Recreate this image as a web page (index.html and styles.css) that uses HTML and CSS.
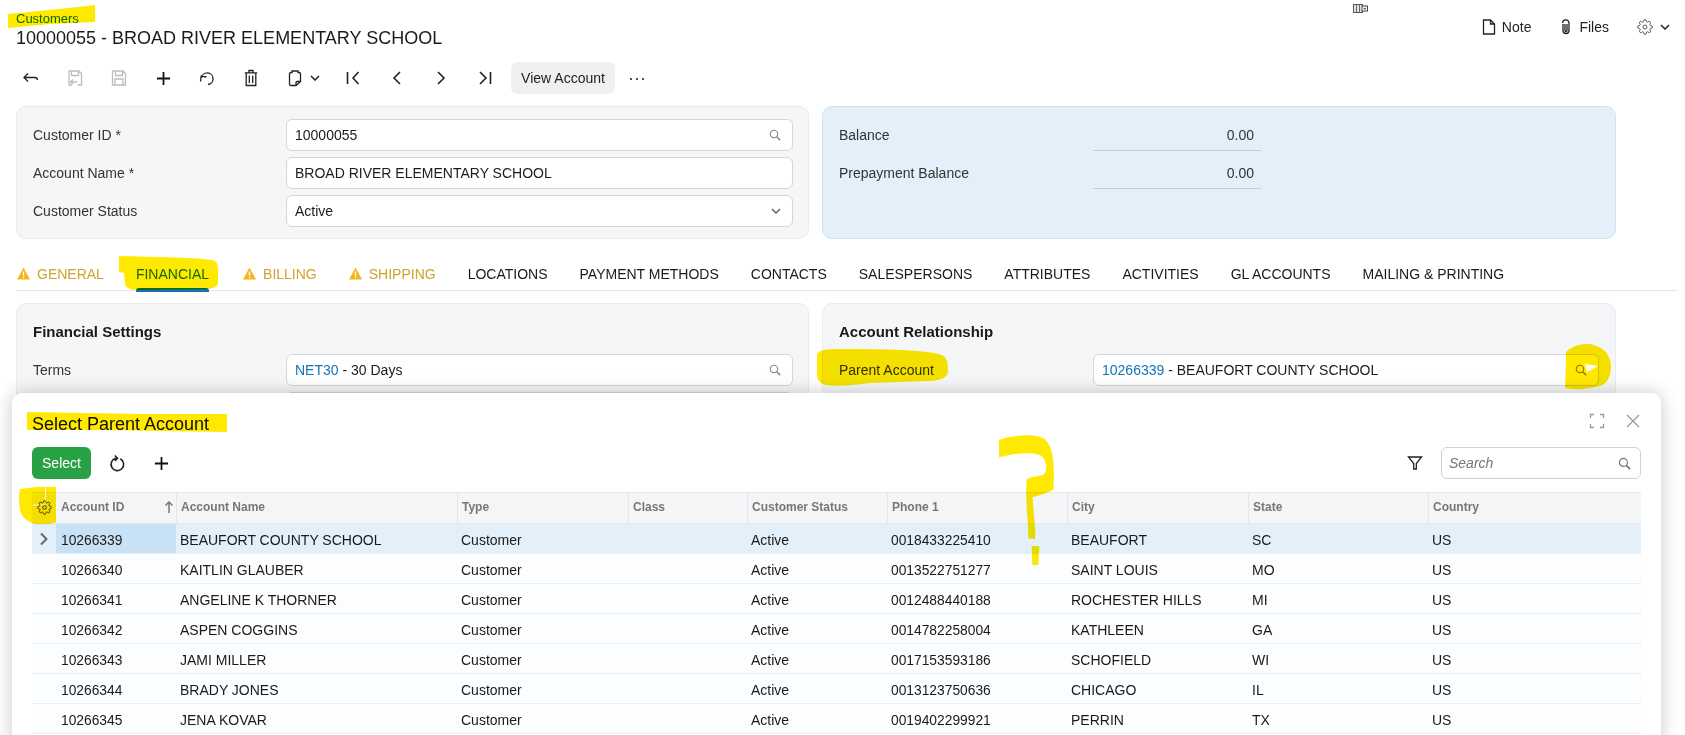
FILE: index.html
```html
<!DOCTYPE html>
<html lang="en">
<head>
<meta charset="utf-8">
<title>Customers</title>
<link rel="stylesheet" href="styles.css">
</head>
<body>
<svg class="defs" width="0" height="0" aria-hidden="true">
  <symbol id="i-search" viewBox="0 0 14 14"><circle cx="5.8" cy="5.8" r="4.3"/><path d="M9 9l4 4" stroke-width="1.8"/></symbol>
  <symbol id="i-chev" viewBox="0 0 10 6"><path d="M1 1l4 4 4-4"/></symbol>
  <symbol id="i-gear" viewBox="0 0 24 24"><path d="M12 15a3 3 0 1 0 0-6 3 3 0 0 0 0 6z"/><path d="M19.4 15a1.65 1.65 0 0 0 .33 1.82l.06.06a2 2 0 0 1 0 2.83 2 2 0 0 1-2.83 0l-.06-.06a1.65 1.65 0 0 0-1.82-.33 1.65 1.65 0 0 0-1 1.51V21a2 2 0 0 1-2 2 2 2 0 0 1-2-2v-.09A1.65 1.65 0 0 0 9 19.4a1.65 1.65 0 0 0-1.82.33l-.06.06a2 2 0 0 1-2.83 0 2 2 0 0 1 0-2.83l.06-.06a1.65 1.65 0 0 0 .33-1.82 1.65 1.65 0 0 0-1.51-1H3a2 2 0 0 1-2-2 2 2 0 0 1 2-2h.09A1.65 1.65 0 0 0 4.6 9a1.65 1.65 0 0 0-.33-1.82l-.06-.06a2 2 0 0 1 0-2.83 2 2 0 0 1 2.83 0l.06.06a1.65 1.65 0 0 0 1.82.33H9a1.65 1.65 0 0 0 1-1.51V3a2 2 0 0 1 2-2 2 2 0 0 1 2 2v.09a1.65 1.65 0 0 0 1 1.51 1.65 1.65 0 0 0 1.82-.33l.06-.06a2 2 0 0 1 2.83 0 2 2 0 0 1 0 2.83l-.06.06a1.65 1.65 0 0 0-.33 1.82V9a1.65 1.65 0 0 0 1.51 1H21a2 2 0 0 1 2 2 2 2 0 0 1-2 2h-.09a1.65 1.65 0 0 0-1.51 1z"/></symbol>
  <symbol id="i-warn" viewBox="0 0 13 13"><path d="M6.5 0.5L13 12.5H0z" fill="#f5b71e" stroke="none"/><path d="M6.5 4.5v4.2M6.5 9.8v1.2" stroke="#fff" stroke-width="1.3"/></symbol>
  <symbol id="i-plus" viewBox="0 0 16 16"><path d="M8 1v14M1 8h14"/></symbol>
</svg>

<div class="page">
  <header class="head">
    <svg class="tinyicon" viewBox="0 0 15 9"><rect x="0.5" y="0.5" width="9" height="8" fill="#e4e4e6" stroke="#555"/><path d="M3.5 1v7M6.5 1v7" stroke="#666"/><rect x="9" y="2" width="5.5" height="5" fill="#fff" stroke="#444"/><rect x="10.8" y="3.8" width="2" height="1.6" fill="#444"/></svg>
    <div class="head-left">
      <a class="crumb">Customers</a>
      <h1 class="title">10000055 - BROAD RIVER ELEMENTARY SCHOOL</h1>
    </div>
    <div class="head-right">
      <span class="ha"><svg class="ic ic-16" viewBox="0 0 16 16"><path d="M2.5 1h7l4 4v10h-11zM9.5 1v4h4"/></svg>Note</span>
      <span class="ha"><svg class="ic ic-16" viewBox="0 0 16 16"><path d="M5 5v6.5a3 3 0 0 0 6 0V4a3.200 3.200 0 0 0-6.400 0M7 5v6.500a1 1 0 0 0 2 0V5"/></svg>Files</span>
      <span class="ha ha-gear"><svg class="ic ic-gear"><use href="#i-gear"/></svg><svg class="ic ic-chev"><use href="#i-chev"/></svg></span>
    </div>
  </header>

  <nav class="toolbar">
    <span class="tb"><svg class="ic ic-18" viewBox="0 0 18 18"><path d="M2 8.5h11c1.6 0 2.4 1 2.4 2.6M6 4.5l-4 4 4 4"/></svg></span>
    <span class="tb off"><svg class="ic ic-18" viewBox="0 0 18 18"><path d="M6 16H3V2h10l2.5 2.5V16h-4M5.5 2v4.5h7V2M7 10.5l-2.5 2.5L7 15M4.5 13H11"/></svg></span>
    <span class="tb off"><svg class="ic ic-18" viewBox="0 0 18 18"><path d="M2.5 2h10.500l2.500 2.500V16h-13zM5.500 2v4.500h7V2M5 16v-6h8v6"/></svg></span>
    <span class="tb"><svg class="ic ic-plus"><use href="#i-plus"/></svg></span>
    <span class="tb"><svg class="ic ic-18" viewBox="0 0 18 18"><path d="M3.500 9a5.800 5.800 0 1 1 6.500 6.500M2.500 12.500L3.200 7l5.300 1"/></svg></span>
    <span class="tb"><svg class="ic ic-18" viewBox="0 0 18 18"><path d="M2.800 3.800h12.400M7 3.500V1.500h4v2M4.200 4v12.500h9.600V4M7.300 6.500v7.500M10.700 6.500v7.500"/></svg></span>
    <span class="tb tb-split"><svg class="ic ic-18" viewBox="0 0 18 18"><path d="M5 3.500H6V2H12V3.500H13Q14.500 3.500 14.500 5V12.500L10 16.500H5Q3.500 16.500 3.500 15V5Q3.500 3.500 5 3.500ZM14.500 12.500H11Q10 12.500 10 13.500V16.500"/></svg><svg class="ic ic-chev"><use href="#i-chev"/></svg></span>
    <span class="tb"><svg class="ic ic-18 strong" viewBox="0 0 18 18"><path d="M3.500 3v12M14.500 3L9 9l5.500 6"/></svg></span>
    <span class="tb"><svg class="ic ic-18 strong" viewBox="0 0 18 18"><path d="M12 3L6 9l6 6"/></svg></span>
    <span class="tb"><svg class="ic ic-18 strong" viewBox="0 0 18 18"><path d="M6 3l6 6-6 6"/></svg></span>
    <span class="tb"><svg class="ic ic-18 strong" viewBox="0 0 18 18"><path d="M14.500 3v12M4 3l6 6-6 6"/></svg></span>
    <button class="btn-soft">View Account</button>
    <span class="tb dots">···</span>
  </nav>

  <section class="cards">
    <div class="card">
      <div class="row"><label class="lbl">Customer ID *</label><div class="field">10000055<svg class="ic ic-find"><use href="#i-search"/></svg></div></div>
      <div class="row"><label class="lbl">Account Name *</label><div class="field">BROAD RIVER ELEMENTARY SCHOOL</div></div>
      <div class="row"><label class="lbl">Customer Status</label><div class="field">Active<svg class="ic ic-chev end"><use href="#i-chev"/></svg></div></div>
    </div>
    <div class="card card-blue">
      <div class="row"><label class="lbl">Balance</label><div class="amount">0.00</div></div>
      <div class="row"><label class="lbl">Prepayment Balance</label><div class="amount">0.00</div></div>
    </div>
  </section>

  <nav class="tabs">
    <span class="tab warn"><svg class="warn-ic"><use href="#i-warn"/></svg>GENERAL</span>
    <span class="tab active">FINANCIAL</span>
    <span class="tab warn"><svg class="warn-ic"><use href="#i-warn"/></svg>BILLING</span>
    <span class="tab warn"><svg class="warn-ic"><use href="#i-warn"/></svg>SHIPPING</span>
    <span class="tab">LOCATIONS</span>
    <span class="tab">PAYMENT METHODS</span>
    <span class="tab">CONTACTS</span>
    <span class="tab">SALESPERSONS</span>
    <span class="tab">ATTRIBUTES</span>
    <span class="tab">ACTIVITIES</span>
    <span class="tab">GL ACCOUNTS</span>
    <span class="tab">MAILING &amp; PRINTING</span>
  </nav>

  <section class="cards cards-lower">
    <div class="card">
      <h2 class="card-title">Financial Settings</h2>
      <div class="row"><label class="lbl">Terms</label><div class="field"><a class="link">NET30</a>&nbsp;- 30 Days<svg class="ic ic-find"><use href="#i-search"/></svg></div></div>
      <div class="row"><label class="lbl"></label><div class="field"></div></div>
    </div>
    <div class="card">
      <h2 class="card-title">Account Relationship</h2>
      <div class="row"><label class="lbl">Parent Account</label><div class="field"><a class="link">10266339</a>&nbsp;- BEAUFORT COUNTY SCHOOL<svg class="ic ic-find"><use href="#i-search"/></svg></div></div>
    </div>
  </section>

  <div class="modal">
    <div class="modal-head">
      <h2 class="modal-title">Select Parent Account</h2>
      <div class="modal-ctl">
        <svg class="ic ic-16 pale" viewBox="0 0 16 16"><path d="M1.500 5V1.500H5M11 1.500h3.500V5M14.500 11v3.500H11M5 14.500H1.500V11"/></svg>
        <svg class="ic ic-16 pale" viewBox="0 0 16 16"><path d="M2 2l12 12M14 2L2 14"/></svg>
      </div>
    </div>
    <div class="modal-tools">
      <button class="btn-green">Select</button>
      <span class="tb"><svg class="ic ic-18 strong" viewBox="0 0 18 18"><path d="M8 4.200A6.300 6.300 0 1 0 12.300 4.800M6.800 1.500L9.500 4.200L6.800 6.800"/></svg></span>
      <span class="tb"><svg class="ic ic-plus"><use href="#i-plus"/></svg></span>
      <span class="tb tb-right"><svg class="ic ic-16" viewBox="0 0 16 16"><path d="M1.500 2h13L9.300 8.500V14H6.700V8.500z"/></svg></span>
      <div class="search"><span class="ph">Search</span><svg class="ic ic-find"><use href="#i-search"/></svg></div>
    </div>
    <div class="grid">
      <div class="g-row g-head">
        <div class="gh gh-gear"><svg class="ic ic-gear-sm"><use href="#i-gear"/></svg></div>
        <div class="gh gh-sort">Account ID<svg class="ic sort" viewBox="0 0 10 14"><path d="M5 13V2M1.500 5.500L5 2l3.500 3.500"/></svg></div>
        <div class="gh">Account Name</div>
        <div class="gh">Type</div>
        <div class="gh">Class</div>
        <div class="gh">Customer Status</div>
        <div class="gh">Phone 1</div>
        <div class="gh">City</div>
        <div class="gh">State</div>
        <div class="gh">Country</div>
      </div>
      <div class="g-row g-sel">
        <div class="gc gc-exp"><svg class="ic exp" viewBox="0 0 10 14"><path d="M2 1.500L7.500 7 2 12.500"/></svg></div>
        <div class="gc gc-id gc-cur">10266339</div><div class="gc">BEAUFORT COUNTY SCHOOL</div><div class="gc">Customer</div><div class="gc"></div><div class="gc">Active</div><div class="gc gc-num">0018433225410</div><div class="gc">BEAUFORT</div><div class="gc">SC</div><div class="gc">US</div>
      </div>
      <div class="g-row">
        <div class="gc"></div><div class="gc gc-id">10266340</div><div class="gc">KAITLIN GLAUBER</div><div class="gc">Customer</div><div class="gc"></div><div class="gc">Active</div><div class="gc gc-num">0013522751277</div><div class="gc">SAINT LOUIS</div><div class="gc">MO</div><div class="gc">US</div>
      </div>
      <div class="g-row">
        <div class="gc"></div><div class="gc gc-id">10266341</div><div class="gc">ANGELINE K THORNER</div><div class="gc">Customer</div><div class="gc"></div><div class="gc">Active</div><div class="gc gc-num">0012488440188</div><div class="gc">ROCHESTER HILLS</div><div class="gc">MI</div><div class="gc">US</div>
      </div>
      <div class="g-row">
        <div class="gc"></div><div class="gc gc-id">10266342</div><div class="gc">ASPEN COGGINS</div><div class="gc">Customer</div><div class="gc"></div><div class="gc">Active</div><div class="gc gc-num">0014782258004</div><div class="gc">KATHLEEN</div><div class="gc">GA</div><div class="gc">US</div>
      </div>
      <div class="g-row">
        <div class="gc"></div><div class="gc gc-id">10266343</div><div class="gc">JAMI MILLER</div><div class="gc">Customer</div><div class="gc"></div><div class="gc">Active</div><div class="gc gc-num">0017153593186</div><div class="gc">SCHOFIELD</div><div class="gc">WI</div><div class="gc">US</div>
      </div>
      <div class="g-row">
        <div class="gc"></div><div class="gc gc-id">10266344</div><div class="gc">BRADY JONES</div><div class="gc">Customer</div><div class="gc"></div><div class="gc">Active</div><div class="gc gc-num">0013123750636</div><div class="gc">CHICAGO</div><div class="gc">IL</div><div class="gc">US</div>
      </div>
      <div class="g-row">
        <div class="gc"></div><div class="gc gc-id">10266345</div><div class="gc">JENA KOVAR</div><div class="gc">Customer</div><div class="gc"></div><div class="gc">Active</div><div class="gc gc-num">0019402299921</div><div class="gc">PERRIN</div><div class="gc">TX</div><div class="gc">US</div>
      </div>
    </div>
  </div>

  <svg class="marks" viewBox="0 0 1685 735" aria-hidden="true">
    <path d="M8 14L50 10L95 5V22L50 24L8 28Z"/>
    <path d="M119 256C150 257 190 257 212 260Q218 261 218 268L218 284Q216 289 205 289L140 290Q126 290 125 284L124 273L119 272Z"/>
    <path d="M817 355Q818 349 835 349C870 349 925 349 942 355Q949 358 948 372Q947 380 930 381L870 383Q840 387 825 385Q817 382 817 375Z"/>
    <path fill-rule="evenodd" d="M1566 352Q1575 343 1590 344Q1610 348 1611 366Q1611 382 1600 386Q1580 391 1565 388Q1566 370 1566 352ZM1585 364L1598 366L1587 372Z"/>
    <path d="M27 412L140 414L227 414V432L100 430L27 430Z"/>
    <path fill-rule="evenodd" d="M20 489Q40 486 56 487L56 522Q50 525 35 524Q22 520 20 510Q18 498 20 489ZM33 504.500H45V505.500H33ZM45 487V503H46V487Z"/>
    <g transform="translate(900 420) scale(.3333)">
      <path d="M297 60C340 45 400 40 430 55C460 75 465 130 460 210C440 220 420 225 398 232C400 280 408 320 405 358L385 355C385 300 375 240 380 180C385 170 410 170 430 165C445 150 440 115 420 105C390 95 340 100 297 112Z"/>
      <path d="M395 378L418 378L415 435L397 435Z"/>
    </g>
  </svg>
</div>
</body>
</html>
```

FILE: styles.css
```css
* { box-sizing: border-box; }
html, body { margin: 0; padding: 0; height: 735px; overflow: hidden; background: #fff; }
body { font-family: "Liberation Sans", Arial, sans-serif; font-size: 14px; color: #1c1c1c; }
.defs { position: absolute; }
.page { position: relative; width: 1685px; height: 735px; overflow: hidden; }

.ic { fill: none; stroke: currentColor; stroke-width: 1.3; flex: none; display: block; }
.ic-16 { width: 16px; height: 16px; }
.ic-18 { width: 18px; height: 18px; }
.ic-chev { width: 10px; height: 6px; stroke-width: 1.5; }
.ic-gear { width: 16px; height: 16px; color: #555; stroke-width: 1.5; }
.ic-plus { width: 15px; height: 15px; stroke-width: 1.9; color: #111; }
.ic-find { width: 12px; height: 12px; color: #8a8a8a; position: absolute; right: 11px; top: 9px; }
.strong { stroke-width: 1.6; }
.pale { color: #9a9a9a; }

/* header */
.head { position: relative; display: flex; justify-content: space-between; height: 62px; padding: 12px 15px 0 16px; }
.crumb { display: block; font-size: 13px; line-height: 14px; color: #0e72b5; }
.title { margin: 1px 0 0; font-size: 18px; line-height: 22px; font-weight: 400; color: #1a1a1a; }
.tinyicon { position: absolute; left: 1353px; top: 4px; width: 15px; height: 9px; }
.head-right { display: flex; gap: 27px; padding-top: 7px; height: 23px; }
.ha { display: flex; align-items: center; gap: 5px; color: #222; }
.ha-gear { gap: 7px; margin-left: 1px; }

/* toolbar */
.toolbar { display: flex; align-items: center; height: 32px; padding-left: 9px; }
.tb { width: 44px; height: 32px; display: flex; align-items: center; justify-content: center; color: #222; flex: none; }
.tb.off { color: #bdbdbd; }
.tb-split { width: 58px; justify-content: flex-start; padding-left: 13px; gap: 6px; }
.btn-soft { margin-left: 4px; width: 104px; height: 32px; border: 0; border-radius: 6px; background: #f0f0f0; font: inherit; color: #222; padding: 0; }
.dots { font-size: 18px; letter-spacing: 0; color: #333; }

/* cards */
.cards { display: grid; grid-template-columns: 793px 794px; gap: 13px; padding-left: 16px; margin-top: 12px; }
.card { display: flex; flex-direction: column; gap: 6px; padding: 12px 15px 11px 16px; background: #f4f6f8; border: 1px solid #e9ebee; border-radius: 10px; }
.card-blue { background: #e3f0f9; border-color: #cfe4f2; }
.card:last-child { padding-right: 16px; }
.row { display: grid; grid-template-columns: 253px 1fr; align-items: center; height: 32px; flex: none; }
.card:last-child .row { grid-template-columns: 254px 1fr; }
.lbl { color: #333; }
.field { position: relative; height: 32px; line-height: 30px; padding-left: 8px; background: #fff; border: 1px solid #d3d6d9; border-radius: 6px; white-space: nowrap; display: flex; }
.field .ic-chev { position: absolute; right: 11px; top: 12px; color: #666; }
.link { color: #1274b4; }
.amount { width: 168px; height: 32px; line-height: 32px; text-align: right; padding-right: 7px; border-bottom: 1px solid #c6ced4; color: #333; }

/* tabs */
.tabs { position: relative; display: flex; gap: 32px; width: 1661px; height: 27px; margin: 25px 0 0 16px; padding-left: 1px; border-bottom: 1px solid #e3e5e8; }
.tab { position: relative; display: flex; align-items: flex-start; gap: 7px; line-height: 20px; white-space: nowrap; color: #1a1a1a; }
.warn { color: #cfa32c; }
.warn-ic { width: 13px; height: 13px; margin-top: 3px; stroke: none; fill: none; }
.active { color: #1274b4; margin-right: 2px; }
.active::after { content: ""; position: absolute; left: 0; right: 0; bottom: -2px; height: 4px; background: #1274b4; border-radius: 3px 3px 0 0; }
.cards-lower { margin-top: 12px; height: 200px; }
.cards-lower .card { padding-top: 18px; }
.card-title { margin: 0 0 6px; font-size: 15px; line-height: 20px; font-weight: 700; color: #1a1a1a; height: 20px; }

/* modal */
.modal { position: absolute; left: 12px; top: 393px; width: 1649px; height: 360px; padding: 18px 20px 0; background: #fff; border-radius: 10px; box-shadow: 0 0 18px rgba(0, 0, 0, .22); }
.modal-head { display: flex; justify-content: space-between; align-items: flex-start; height: 24px; margin-bottom: 12px; }
.modal-title { margin: 1px 0 0; font-size: 18px; line-height: 24px; font-weight: 400; color: #111; }
.modal-ctl { display: flex; gap: 20px; margin-top: 2px; }
.modal-tools { display: flex; align-items: center; height: 32px; margin-bottom: 13px; }
.btn-green { width: 59px; height: 32px; margin-right: 4px; padding: 0; border: 0; border-radius: 6px; background: #28a244; color: #fff; font: inherit; font-size: 14px; }
.tb-right { margin-left: auto; margin-right: 4px; }
.search { position: relative; width: 200px; height: 32px; border: 1px solid #cfd2d5; border-radius: 6px; line-height: 30px; padding-left: 7px; }
.ph { font-style: italic; color: #777; }
.search .ic-find { width: 13px; height: 13px; right: 9px; color: #777; }

/* grid */
.g-row { display: grid; grid-template-columns: 24px 120px 281px 171px 119px 140px 180px 181px 180px 213px; height: 30px; border-bottom: 1px solid #e4eff8; background: #fbfdff; }
.g-head { height: 32px; background: #f4f5f7; border-top: 1px solid #e6e7ea; border-bottom-color: #e6e7ea; }
.g-sel { background: #e3f0f9; }
.gh { position: relative; font-size: 12px; font-weight: 700; color: #777; line-height: 28px; padding-left: 4px; border-left: 1px solid #e4e6e9; }
.gh-gear { border-left: 0; padding: 7px 0 0 5px; }
.gh-sort { border-left: 0; padding-left: 5px; }
.ic-gear-sm { width: 15px; height: 15px; color: #222; }
.sort { position: absolute; right: 2px; top: 7px; width: 10px; height: 14px; color: #777; stroke-width: 1.500; }
.gc { height: 29px; line-height: 32px; padding-left: 4px; white-space: nowrap; color: #1a1a1a; font-size: 14px; }
.gc-id { padding-left: 5px; padding-top: 1px; font-size: 13.800px; }
.gc-num { padding-top: 1px; font-size: 13.800px; }
.gc-cur { background: #c9e1f5; }
.gc-exp { padding: 8px 0 0 7px; }
.exp { width: 10px; height: 14px; color: #666; stroke-width: 2; }

/* hand-drawn marks */
.marks { position: absolute; left: 0; top: 0; width: 1685px; height: 735px; mix-blend-mode: multiply; pointer-events: none; fill: #ffe900; }
```
